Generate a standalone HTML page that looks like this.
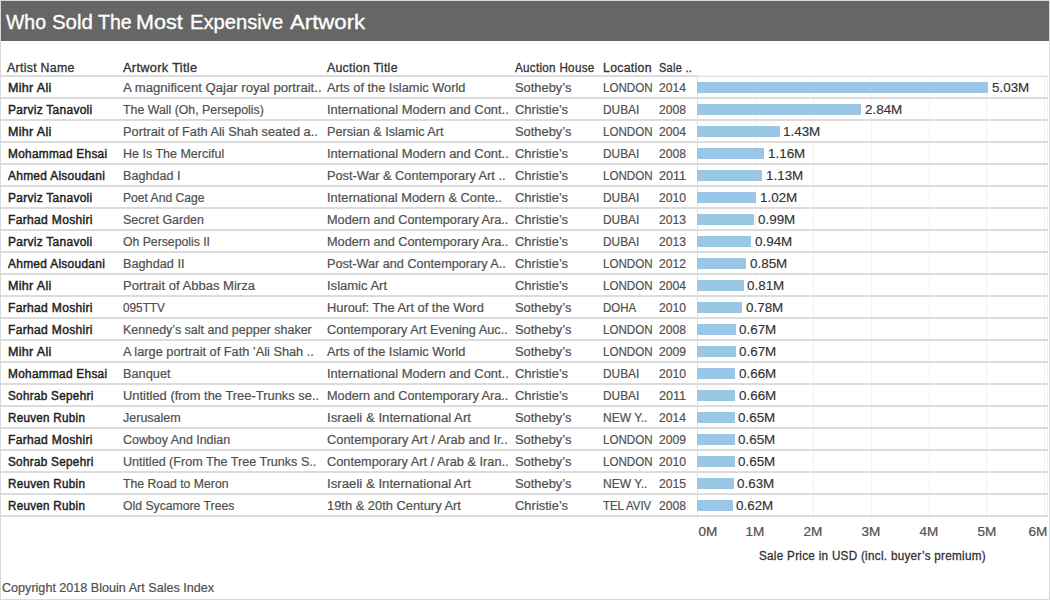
<!DOCTYPE html>
<html><head><meta charset="utf-8"><title>Who Sold The Most Expensive Artwork</title>
<style>
html,body{margin:0;padding:0;}
body{width:1050px;height:600px;position:relative;overflow:hidden;background:#fff;font-family:"Liberation Sans",sans-serif;}
.a{position:absolute;}
.t{position:absolute;white-space:nowrap;line-height:12px;font-size:12px;transform-origin:0 0;}
.h{color:#333;-webkit-text-stroke:0.3px #333;letter-spacing:0.3px;}
.n{color:#1f1f1f;-webkit-text-stroke:0.45px #1f1f1f;letter-spacing:0.3px;}
.r{color:#505050;-webkit-text-stroke:0.2px #505050;}
.l{color:#333;-webkit-text-stroke:0.15px #333;background:#fff;font-size:13px;line-height:16px;padding:0 1px;}
.ln{position:absolute;left:1px;width:1047px;height:2px;background:#dcdcdc;}
.bar{position:absolute;left:697px;height:11px;background:#9bc7e7;}
.g{position:absolute;top:76px;width:1px;height:443px;background:#f2f2f2;}
</style></head><body>

<div class="a" style="left:0;top:0;width:1048px;height:598px;border:1px solid #d9d9d9;"></div>
<div class="a" style="left:1px;top:1px;width:1048px;height:40px;background:#666;"></div>
<div class="t" style="left:6.11px;top:11px;font-size:21px;line-height:21px;color:#fff;-webkit-text-stroke:0.35px #fff;transform:scaleX(0.9256);">Who</div>
<div class="t" style="left:51.53px;top:11px;font-size:21px;line-height:21px;color:#fff;-webkit-text-stroke:0.35px #fff;transform:scaleX(0.9725);">Sold</div>
<div class="t" style="left:98.13px;top:11px;font-size:21px;line-height:21px;color:#fff;-webkit-text-stroke:0.35px #fff;transform:scaleX(0.9306);">The</div>
<div class="t" style="left:135.86px;top:11px;font-size:21px;line-height:21px;color:#fff;-webkit-text-stroke:0.35px #fff;transform:scaleX(1.0267);">Most</div>
<div class="t" style="left:190.17px;top:11px;font-size:21px;line-height:21px;color:#fff;-webkit-text-stroke:0.35px #fff;transform:scaleX(0.9615);">Expensive</div>
<div class="t" style="left:289.50px;top:11px;font-size:21px;line-height:21px;color:#fff;-webkit-text-stroke:0.35px #fff;transform:scaleX(1.0556);">Artwork</div>
<div class="g" style="left:755px;"></div>
<div class="g" style="left:813px;"></div>
<div class="g" style="left:871px;"></div>
<div class="g" style="left:929px;"></div>
<div class="g" style="left:986px;"></div>
<div class="g" style="left:1044px;"></div>
<div class="a" style="left:697px;top:76px;width:1px;height:443px;background:#e4e4e4;"></div>
<div class="t h" style="left:7.0px;top:61.84px;transform:scaleX(1.0258);">Artist Name</div>
<div class="t h" style="left:123.0px;top:61.84px;transform:scaleX(1.0643);">Artwork Title</div>
<div class="t h" style="left:327.0px;top:61.84px;transform:scaleX(1.0217);">Auction Title</div>
<div class="t h" style="left:515.0px;top:61.84px;transform:scaleX(0.9707);">Auction House</div>
<div class="t h" style="left:603.0px;top:61.84px;transform:scaleX(1.0217);">Location</div>
<div class="t h" style="left:659.0px;top:61.84px;transform:scaleX(0.9143);">Sale ..</div>
<div class="a" style="left:1px;top:75px;width:697px;height:2px;background:#dcdcdc;"></div>
<div class="a" style="left:698px;top:75px;width:350px;height:1px;background:#f4f4f4;"></div>
<div class="a" style="left:698px;top:76px;width:350px;height:1px;background:#e2e2e2;"></div>
<div class="a" style="left:1047px;top:76px;width:1px;height:441px;background:#f2f2f2;"></div>
<div class="ln" style="top:97px;"></div>
<div class="ln" style="top:119px;"></div>
<div class="ln" style="top:141px;"></div>
<div class="ln" style="top:163px;"></div>
<div class="ln" style="top:185px;"></div>
<div class="ln" style="top:207px;"></div>
<div class="ln" style="top:229px;"></div>
<div class="ln" style="top:251px;"></div>
<div class="ln" style="top:273px;"></div>
<div class="ln" style="top:295px;"></div>
<div class="ln" style="top:317px;"></div>
<div class="ln" style="top:339px;"></div>
<div class="ln" style="top:361px;"></div>
<div class="ln" style="top:383px;"></div>
<div class="ln" style="top:405px;"></div>
<div class="ln" style="top:427px;"></div>
<div class="ln" style="top:449px;"></div>
<div class="ln" style="top:471px;"></div>
<div class="ln" style="top:493px;"></div>
<div class="ln" style="top:515px;"></div>
<div class="t n" style="left:7.5px;top:81.84px;transform:scaleX(1.0439);">Mihr Ali</div>
<div class="t r" style="left:123.0px;top:81.84px;transform:scaleX(1.0945);">A magnificent Qajar royal portrait..</div>
<div class="t r" style="left:327.0px;top:81.84px;transform:scaleX(1.0662);">Arts of the Islamic World</div>
<div class="t r" style="left:515.0px;top:81.84px;transform:scaleX(1.0745);">Sotheby’s</div>
<div class="t r" style="left:603.0px;top:81.84px;transform:scaleX(0.966);">LONDON</div>
<div class="t r" style="left:659.0px;top:81.84px;transform:scaleX(1.0111);">2014</div>
<div class="bar" style="top:82px;width:291.2px;"></div>
<div class="t l" style="left:990.7px;top:79.50px;transform:scaleX(1.03);">5.03M</div>
<div class="t n" style="left:7.5px;top:103.84px;transform:scaleX(0.9941);">Parviz Tanavoli</div>
<div class="t r" style="left:123.0px;top:103.84px;transform:scaleX(1.0285);">The Wall (Oh, Persepolis)</div>
<div class="t r" style="left:327.0px;top:103.84px;transform:scaleX(1.0772);">International Modern and Cont..</div>
<div class="t r" style="left:515.0px;top:103.84px;transform:scaleX(1.0796);">Christie’s</div>
<div class="t r" style="left:603.0px;top:103.84px;transform:scaleX(0.9886);">DUBAI</div>
<div class="t r" style="left:659.0px;top:103.84px;transform:scaleX(1.0111);">2008</div>
<div class="bar" style="top:104px;width:164.4px;"></div>
<div class="t l" style="left:863.9px;top:101.50px;transform:scaleX(1.03);">2.84M</div>
<div class="t n" style="left:7.5px;top:125.84px;transform:scaleX(1.0439);">Mihr Ali</div>
<div class="t r" style="left:123.0px;top:125.84px;transform:scaleX(1.0657);">Portrait of Fath Ali Shah seated a..</div>
<div class="t r" style="left:327.0px;top:125.84px;transform:scaleX(1.0518);">Persian &amp; Islamic Art</div>
<div class="t r" style="left:515.0px;top:125.84px;transform:scaleX(1.0745);">Sotheby’s</div>
<div class="t r" style="left:603.0px;top:125.84px;transform:scaleX(0.966);">LONDON</div>
<div class="t r" style="left:659.0px;top:125.84px;transform:scaleX(1.0111);">2004</div>
<div class="bar" style="top:126px;width:82.8px;"></div>
<div class="t l" style="left:782.3px;top:123.50px;transform:scaleX(1.03);">1.43M</div>
<div class="t n" style="left:7.5px;top:147.84px;transform:scaleX(0.9851);">Mohammad Ehsai</div>
<div class="t r" style="left:123.0px;top:147.84px;transform:scaleX(1.0417);">He Is The Merciful</div>
<div class="t r" style="left:327.0px;top:147.84px;transform:scaleX(1.0772);">International Modern and Cont..</div>
<div class="t r" style="left:515.0px;top:147.84px;transform:scaleX(1.0796);">Christie’s</div>
<div class="t r" style="left:603.0px;top:147.84px;transform:scaleX(0.9886);">DUBAI</div>
<div class="t r" style="left:659.0px;top:147.84px;transform:scaleX(1.0111);">2008</div>
<div class="bar" style="top:148px;width:67.2px;"></div>
<div class="t l" style="left:766.7px;top:145.50px;transform:scaleX(1.03);">1.16M</div>
<div class="t n" style="left:7.5px;top:169.84px;transform:scaleX(0.9918);">Ahmed Alsoudani</div>
<div class="t r" style="left:123.0px;top:169.84px;transform:scaleX(1.0491);">Baghdad I</div>
<div class="t r" style="left:327.0px;top:169.84px;transform:scaleX(1.0605);">Post-War &amp; Contemporary Art ..</div>
<div class="t r" style="left:515.0px;top:169.84px;transform:scaleX(1.0796);">Christie’s</div>
<div class="t r" style="left:603.0px;top:169.84px;transform:scaleX(0.966);">LONDON</div>
<div class="t r" style="left:659.0px;top:169.84px;transform:scaleX(1.05);">2011</div>
<div class="bar" style="top:170px;width:65.4px;"></div>
<div class="t l" style="left:764.9px;top:167.50px;transform:scaleX(1.03);">1.13M</div>
<div class="t n" style="left:7.5px;top:191.84px;transform:scaleX(0.9941);">Parviz Tanavoli</div>
<div class="t r" style="left:123.0px;top:191.84px;transform:scaleX(1.0088);">Poet And Cage</div>
<div class="t r" style="left:327.0px;top:191.84px;transform:scaleX(1.0704);">International Modern &amp; Conte..</div>
<div class="t r" style="left:515.0px;top:191.84px;transform:scaleX(1.0796);">Christie’s</div>
<div class="t r" style="left:603.0px;top:191.84px;transform:scaleX(0.9886);">DUBAI</div>
<div class="t r" style="left:659.0px;top:191.84px;transform:scaleX(1.0111);">2010</div>
<div class="bar" style="top:192px;width:59.1px;"></div>
<div class="t l" style="left:758.6px;top:189.50px;transform:scaleX(1.03);">1.02M</div>
<div class="t n" style="left:7.5px;top:213.84px;transform:scaleX(1.0071);">Farhad Moshiri</div>
<div class="t r" style="left:123.0px;top:213.84px;transform:scaleX(1.0364);">Secret Garden</div>
<div class="t r" style="left:327.0px;top:213.84px;transform:scaleX(1.0582);">Modern and Contemporary Ara..</div>
<div class="t r" style="left:515.0px;top:213.84px;transform:scaleX(1.0796);">Christie’s</div>
<div class="t r" style="left:603.0px;top:213.84px;transform:scaleX(0.9886);">DUBAI</div>
<div class="t r" style="left:659.0px;top:213.84px;transform:scaleX(1.0111);">2013</div>
<div class="bar" style="top:214px;width:57.3px;"></div>
<div class="t l" style="left:756.8px;top:211.50px;transform:scaleX(1.03);">0.99M</div>
<div class="t n" style="left:7.5px;top:235.84px;transform:scaleX(0.9941);">Parviz Tanavoli</div>
<div class="t r" style="left:123.0px;top:235.84px;transform:scaleX(1.0188);">Oh Persepolis II</div>
<div class="t r" style="left:327.0px;top:235.84px;transform:scaleX(1.0582);">Modern and Contemporary Ara..</div>
<div class="t r" style="left:515.0px;top:235.84px;transform:scaleX(1.0796);">Christie’s</div>
<div class="t r" style="left:603.0px;top:235.84px;transform:scaleX(0.9886);">DUBAI</div>
<div class="t r" style="left:659.0px;top:235.84px;transform:scaleX(1.0111);">2013</div>
<div class="bar" style="top:236px;width:54.4px;"></div>
<div class="t l" style="left:753.9px;top:233.50px;transform:scaleX(1.03);">0.94M</div>
<div class="t n" style="left:7.5px;top:257.84px;transform:scaleX(0.9918);">Ahmed Alsoudani</div>
<div class="t r" style="left:123.0px;top:257.84px;transform:scaleX(1.0589);">Baghdad II</div>
<div class="t r" style="left:327.0px;top:257.84px;transform:scaleX(1.0542);">Post-War and Contemporary A..</div>
<div class="t r" style="left:515.0px;top:257.84px;transform:scaleX(1.0796);">Christie’s</div>
<div class="t r" style="left:603.0px;top:257.84px;transform:scaleX(0.966);">LONDON</div>
<div class="t r" style="left:659.0px;top:257.84px;transform:scaleX(1.0111);">2012</div>
<div class="bar" style="top:258px;width:49.2px;"></div>
<div class="t l" style="left:748.7px;top:255.50px;transform:scaleX(1.03);">0.85M</div>
<div class="t n" style="left:7.5px;top:279.84px;transform:scaleX(1.0439);">Mihr Ali</div>
<div class="t r" style="left:123.0px;top:279.84px;transform:scaleX(1.0868);">Portrait of Abbas Mirza</div>
<div class="t r" style="left:327.0px;top:279.84px;transform:scaleX(1.0855);">Islamic Art</div>
<div class="t r" style="left:515.0px;top:279.84px;transform:scaleX(1.0796);">Christie’s</div>
<div class="t r" style="left:603.0px;top:279.84px;transform:scaleX(0.966);">LONDON</div>
<div class="t r" style="left:659.0px;top:279.84px;transform:scaleX(1.0111);">2004</div>
<div class="bar" style="top:280px;width:46.9px;"></div>
<div class="t l" style="left:746.4px;top:277.50px;transform:scaleX(1.03);">0.81M</div>
<div class="t n" style="left:7.5px;top:301.84px;transform:scaleX(1.0071);">Farhad Moshiri</div>
<div class="t r" style="left:123.0px;top:301.84px;transform:scaleX(0.9814);">095TTV</div>
<div class="t r" style="left:327.0px;top:301.84px;transform:scaleX(1.0717);">Hurouf: The Art of the Word</div>
<div class="t r" style="left:515.0px;top:301.84px;transform:scaleX(1.0745);">Sotheby’s</div>
<div class="t r" style="left:603.0px;top:301.84px;transform:scaleX(0.9529);">DOHA</div>
<div class="t r" style="left:659.0px;top:301.84px;transform:scaleX(1.0111);">2010</div>
<div class="bar" style="top:302px;width:45.2px;"></div>
<div class="t l" style="left:744.7px;top:299.50px;transform:scaleX(1.03);">0.78M</div>
<div class="t n" style="left:7.5px;top:323.84px;transform:scaleX(1.0071);">Farhad Moshiri</div>
<div class="t r" style="left:123.0px;top:323.84px;transform:scaleX(1.0414);">Kennedy’s salt and pepper shaker</div>
<div class="t r" style="left:327.0px;top:323.84px;transform:scaleX(1.0582);">Contemporary Art Evening Auc..</div>
<div class="t r" style="left:515.0px;top:323.84px;transform:scaleX(1.0745);">Sotheby’s</div>
<div class="t r" style="left:603.0px;top:323.84px;transform:scaleX(0.966);">LONDON</div>
<div class="t r" style="left:659.0px;top:323.84px;transform:scaleX(1.0111);">2008</div>
<div class="bar" style="top:324px;width:38.8px;"></div>
<div class="t l" style="left:738.3px;top:321.50px;transform:scaleX(1.03);">0.67M</div>
<div class="t n" style="left:7.5px;top:345.84px;transform:scaleX(1.0439);">Mihr Ali</div>
<div class="t r" style="left:123.0px;top:345.84px;transform:scaleX(1.0637);">A large portrait of Fath ’Ali Shah ..</div>
<div class="t r" style="left:327.0px;top:345.84px;transform:scaleX(1.0662);">Arts of the Islamic World</div>
<div class="t r" style="left:515.0px;top:345.84px;transform:scaleX(1.0745);">Sotheby’s</div>
<div class="t r" style="left:603.0px;top:345.84px;transform:scaleX(0.966);">LONDON</div>
<div class="t r" style="left:659.0px;top:345.84px;transform:scaleX(1.0111);">2009</div>
<div class="bar" style="top:346px;width:38.8px;"></div>
<div class="t l" style="left:738.3px;top:343.50px;transform:scaleX(1.03);">0.67M</div>
<div class="t n" style="left:7.5px;top:367.84px;transform:scaleX(0.9851);">Mohammad Ehsai</div>
<div class="t r" style="left:123.0px;top:367.84px;transform:scaleX(1.0636);">Banquet</div>
<div class="t r" style="left:327.0px;top:367.84px;transform:scaleX(1.0772);">International Modern and Cont..</div>
<div class="t r" style="left:515.0px;top:367.84px;transform:scaleX(1.0796);">Christie’s</div>
<div class="t r" style="left:603.0px;top:367.84px;transform:scaleX(0.9886);">DUBAI</div>
<div class="t r" style="left:659.0px;top:367.84px;transform:scaleX(1.0111);">2010</div>
<div class="bar" style="top:368px;width:38.2px;"></div>
<div class="t l" style="left:737.7px;top:365.50px;transform:scaleX(1.03);">0.66M</div>
<div class="t n" style="left:7.5px;top:389.84px;transform:scaleX(0.977);">Sohrab Sepehri</div>
<div class="t r" style="left:123.0px;top:389.84px;transform:scaleX(1.0762);">Untitled (from the Tree-Trunks se..</div>
<div class="t r" style="left:327.0px;top:389.84px;transform:scaleX(1.0582);">Modern and Contemporary Ara..</div>
<div class="t r" style="left:515.0px;top:389.84px;transform:scaleX(1.0796);">Christie’s</div>
<div class="t r" style="left:603.0px;top:389.84px;transform:scaleX(0.9886);">DUBAI</div>
<div class="t r" style="left:659.0px;top:389.84px;transform:scaleX(1.05);">2011</div>
<div class="bar" style="top:390px;width:38.2px;"></div>
<div class="t l" style="left:737.7px;top:387.50px;transform:scaleX(1.03);">0.66M</div>
<div class="t n" style="left:7.5px;top:411.84px;transform:scaleX(0.9696);">Reuven Rubin</div>
<div class="t r" style="left:123.0px;top:411.84px;transform:scaleX(1.0436);">Jerusalem</div>
<div class="t r" style="left:327.0px;top:411.84px;transform:scaleX(1.1015);">Israeli &amp; International Art</div>
<div class="t r" style="left:515.0px;top:411.84px;transform:scaleX(1.0745);">Sotheby’s</div>
<div class="t r" style="left:603.0px;top:411.84px;transform:scaleX(1.0047);">NEW Y..</div>
<div class="t r" style="left:659.0px;top:411.84px;transform:scaleX(1.0111);">2014</div>
<div class="bar" style="top:412px;width:37.6px;"></div>
<div class="t l" style="left:737.1px;top:409.50px;transform:scaleX(1.03);">0.65M</div>
<div class="t n" style="left:7.5px;top:433.84px;transform:scaleX(1.0071);">Farhad Moshiri</div>
<div class="t r" style="left:123.0px;top:433.84px;transform:scaleX(1.0359);">Cowboy And Indian</div>
<div class="t r" style="left:327.0px;top:433.84px;transform:scaleX(1.0708);">Contemporary Art / Arab and Ir..</div>
<div class="t r" style="left:515.0px;top:433.84px;transform:scaleX(1.0745);">Sotheby’s</div>
<div class="t r" style="left:603.0px;top:433.84px;transform:scaleX(0.966);">LONDON</div>
<div class="t r" style="left:659.0px;top:433.84px;transform:scaleX(1.0111);">2009</div>
<div class="bar" style="top:434px;width:37.6px;"></div>
<div class="t l" style="left:737.1px;top:431.50px;transform:scaleX(1.03);">0.65M</div>
<div class="t n" style="left:7.5px;top:455.84px;transform:scaleX(0.977);">Sohrab Sepehri</div>
<div class="t r" style="left:123.0px;top:455.84px;transform:scaleX(1.0475);">Untitled (From The Tree Trunks S..</div>
<div class="t r" style="left:327.0px;top:455.84px;transform:scaleX(1.0635);">Contemporary Art / Arab &amp; Iran..</div>
<div class="t r" style="left:515.0px;top:455.84px;transform:scaleX(1.0745);">Sotheby’s</div>
<div class="t r" style="left:603.0px;top:455.84px;transform:scaleX(0.966);">LONDON</div>
<div class="t r" style="left:659.0px;top:455.84px;transform:scaleX(1.0111);">2010</div>
<div class="bar" style="top:456px;width:37.6px;"></div>
<div class="t l" style="left:737.1px;top:453.50px;transform:scaleX(1.03);">0.65M</div>
<div class="t n" style="left:7.5px;top:477.84px;transform:scaleX(0.9696);">Reuven Rubin</div>
<div class="t r" style="left:123.0px;top:477.84px;transform:scaleX(1.0204);">The Road to Meron</div>
<div class="t r" style="left:327.0px;top:477.84px;transform:scaleX(1.1015);">Israeli &amp; International Art</div>
<div class="t r" style="left:515.0px;top:477.84px;transform:scaleX(1.0745);">Sotheby’s</div>
<div class="t r" style="left:603.0px;top:477.84px;transform:scaleX(1.0047);">NEW Y..</div>
<div class="t r" style="left:659.0px;top:477.84px;transform:scaleX(1.0111);">2015</div>
<div class="bar" style="top:478px;width:36.5px;"></div>
<div class="t l" style="left:736.0px;top:475.50px;transform:scaleX(1.03);">0.63M</div>
<div class="t n" style="left:7.5px;top:499.84px;transform:scaleX(0.9696);">Reuven Rubin</div>
<div class="t r" style="left:123.0px;top:499.84px;transform:scaleX(1.0183);">Old Sycamore Trees</div>
<div class="t r" style="left:327.0px;top:499.84px;transform:scaleX(1.0734);">19th &amp; 20th Century Art</div>
<div class="t r" style="left:515.0px;top:499.84px;transform:scaleX(1.0796);">Christie’s</div>
<div class="t r" style="left:603.0px;top:499.84px;transform:scaleX(0.951);">TEL AVIV</div>
<div class="t r" style="left:659.0px;top:499.84px;transform:scaleX(1.0111);">2008</div>
<div class="bar" style="top:500px;width:35.9px;"></div>
<div class="t l" style="left:735.4px;top:497.50px;transform:scaleX(1.03);">0.62M</div>
<div class="t r" style="left:688.0px;top:526.14px;width:40px;text-align:center;transform:scaleX(1.13);transform-origin:50% 0;">0M</div>
<div class="t r" style="left:734.9px;top:526.14px;width:40px;text-align:center;transform:scaleX(1.13);transform-origin:50% 0;">1M</div>
<div class="t r" style="left:792.8px;top:526.14px;width:40px;text-align:center;transform:scaleX(1.13);transform-origin:50% 0;">2M</div>
<div class="t r" style="left:850.7px;top:526.14px;width:40px;text-align:center;transform:scaleX(1.13);transform-origin:50% 0;">3M</div>
<div class="t r" style="left:908.6px;top:526.14px;width:40px;text-align:center;transform:scaleX(1.13);transform-origin:50% 0;">4M</div>
<div class="t r" style="left:966.5px;top:526.14px;width:40px;text-align:center;transform:scaleX(1.13);transform-origin:50% 0;">5M</div>
<div class="t r" style="left:1017.9px;top:526.14px;width:40px;text-align:center;transform:scaleX(1.13);transform-origin:50% 0;">6M</div>
<div class="t h" style="left:759.0px;top:550.04px;transform:scaleX(0.973);">Sale Price in USD (incl. buyer’s premium)</div>
<div class="t r" style="left:1.5px;top:582.14px;transform:scaleX(1.049);">Copyright 2018 Blouin Art Sales Index</div>
</body></html>
